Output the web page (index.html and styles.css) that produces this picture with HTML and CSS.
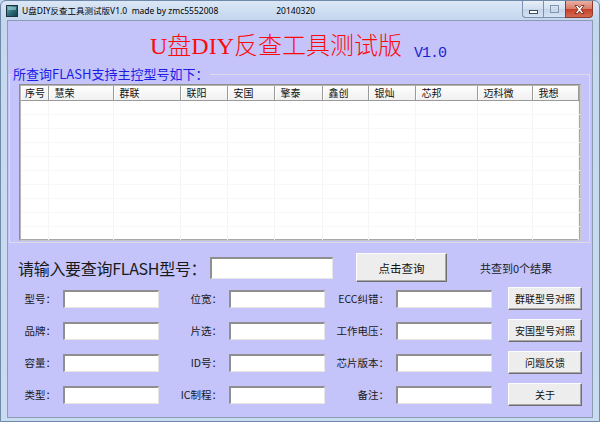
FILE: index.html
```html
<!DOCTYPE html>
<html lang="zh-CN">
<head>
<meta charset="utf-8">
<title>U盘DIY反查工具测试版V1.0</title>
<link rel="stylesheet" href="styles.css">
</head>
<body>
<div class="window">
  <div class="titlebar">
    <svg class="app-icon" width="12" height="12" viewBox="0 0 12 12">
      <defs>
        <linearGradient id="ig" x1="0" y1="0" x2="1" y2="1">
          <stop offset="0" stop-color="#7fb7c0"/>
          <stop offset="0.5" stop-color="#2d6f7d"/>
          <stop offset="1" stop-color="#123c48"/>
        </linearGradient>
      </defs>
      <rect x="0.5" y="0.5" width="11" height="11" fill="url(#ig)" stroke="#1d3440"/>
      <rect x="2" y="2" width="8" height="3" fill="#9fd0d6" opacity="0.6"/>
    </svg>
    <span class="caption">U盘DIY反查工具测试版V1.0&nbsp;&nbsp;made by zmc5552008</span>
    <span class="caption-date">20140320</span>
    <div class="caption-buttons">
      <span class="cb cb-min"><svg width="9" height="4" viewBox="0 0 9 4"><rect x="0.5" y="0.5" width="8" height="3" fill="#fff" stroke="#3b4f66"/></svg></span>
      <span class="cb cb-max"><svg width="9" height="8" viewBox="0 0 9 8"><rect x="0.5" y="0.5" width="8" height="7" fill="none" stroke="#8296ae"/><rect x="2.5" y="2.5" width="4" height="3" fill="none" stroke="#cdd8e6"/></svg></span>
      <span class="cb cb-close"><svg width="11" height="9" viewBox="0 0 11 9"><path d="M1 0.5h2.5l2 2.2 2-2.2H10L7 4.5l3 4H7.5l-2-2.4-2 2.4H1l3-4z" fill="#fff" stroke="#5b1f14" stroke-width="0.8" stroke-linejoin="round"/></svg></span>
    </div>
  </div>
  <div class="client">
    <div class="heading">
      <span class="app-title">U盘DIY反查工具测试版</span>
      <span class="app-version">V1.0</span>
    </div>
    <fieldset class="group">
      <legend class="group-title">所查询FLASH支持主控型号如下：</legend>
      <div class="listview">
        <table class="lv">
          <colgroup>
            <col class="w27"><col class="w65"><col class="w67"><col class="w47"><col class="w47"><col class="w48"><col class="w46"><col class="w47"><col class="w62"><col class="w55"><col class="w46"><col class="wfill">
          </colgroup>
          <thead>
            <tr><th>序号</th><th>慧荣</th><th>群联</th><th>联阳</th><th>安国</th><th>擎泰</th><th>鑫创</th><th>银灿</th><th>芯邦</th><th>迈科微</th><th>我想</th><th class="filler"></th></tr>
          </thead>
          <tbody>
            <tr><td></td><td></td><td></td><td></td><td></td><td></td><td></td><td></td><td></td><td></td><td></td><td></td></tr>
            <tr><td></td><td></td><td></td><td></td><td></td><td></td><td></td><td></td><td></td><td></td><td></td><td></td></tr>
            <tr><td></td><td></td><td></td><td></td><td></td><td></td><td></td><td></td><td></td><td></td><td></td><td></td></tr>
            <tr><td></td><td></td><td></td><td></td><td></td><td></td><td></td><td></td><td></td><td></td><td></td><td></td></tr>
            <tr><td></td><td></td><td></td><td></td><td></td><td></td><td></td><td></td><td></td><td></td><td></td><td></td></tr>
            <tr><td></td><td></td><td></td><td></td><td></td><td></td><td></td><td></td><td></td><td></td><td></td><td></td></tr>
            <tr><td></td><td></td><td></td><td></td><td></td><td></td><td></td><td></td><td></td><td></td><td></td><td></td></tr>
            <tr><td></td><td></td><td></td><td></td><td></td><td></td><td></td><td></td><td></td><td></td><td></td><td></td></tr>
            <tr><td></td><td></td><td></td><td></td><td></td><td></td><td></td><td></td><td></td><td></td><td></td><td></td></tr>
            <tr><td></td><td></td><td></td><td></td><td></td><td></td><td></td><td></td><td></td><td></td><td></td><td></td></tr>
          </tbody>
        </table>
      </div>
    </fieldset>
    <div class="search-row">
      <span class="search-label">请输入要查询FLASH型号：</span>
      <input class="field search-input" type="text">
      <button class="btn btn-search" type="button">点击查询</button>
      <span class="result">共查到0个结果</span>
    </div>
    <div class="form-grid">
      <label class="lbl">型号：</label><input class="field" type="text">
      <label class="lbl">位宽：</label><input class="field" type="text">
      <label class="lbl">ECC纠错：</label><input class="field" type="text">
      <button class="btn btn-small" type="button">群联型号对照</button>

      <label class="lbl">品牌：</label><input class="field" type="text">
      <label class="lbl">片选：</label><input class="field" type="text">
      <label class="lbl">工作电压：</label><input class="field" type="text">
      <button class="btn btn-small" type="button">安国型号对照</button>

      <label class="lbl">容量：</label><input class="field" type="text">
      <label class="lbl">ID号：</label><input class="field" type="text">
      <label class="lbl">芯片版本：</label><input class="field" type="text">
      <button class="btn btn-small" type="button">问题反馈</button>

      <label class="lbl">类型：</label><input class="field" type="text">
      <label class="lbl">IC制程：</label><input class="field" type="text">
      <label class="lbl">备注：</label><input class="field" type="text">
      <button class="btn btn-small" type="button">关于</button>
    </div>
  </div>
</div>
</body>
</html>
```

FILE: styles.css
```css
* { box-sizing: border-box; }
html, body { margin: 0; padding: 0; }
body {
  width: 600px;
  height: 422px;
  overflow: hidden;
  background: #c5d8ef;
  font-family: "Noto Sans CJK SC", sans-serif;
  color: #1a1a1a;
}

/* ---------- shared controls ---------- */
.field {
  display: block;
  flex: none;
  width: 96px;
  height: 18px;
  margin: 0;
  padding: 0 2px;
  background: #fff;
  border-style: solid;
  border-width: 2px 1px 1px 2px;
  border-color: #8f8f8f #e6e6e6 #e6e6e6 #8f8f8f;
  outline: none;
}
.btn {
  flex: none;
  margin: 0;
  padding: 0;
  background: #ededed;
  border: 1px solid;
  border-color: #fcfcfc #6e6e6e #6e6e6e #fcfcfc;
  box-shadow: inset -1px -1px 0 #a8a8a8;
  font-family: "Noto Sans CJK SC", sans-serif;
  color: #111;
}

.window {
  width: 600px;
  height: 422px;
  display: flex;
  flex-direction: column;
  border: 1px solid #6f89a8;
  border-radius: 6px 6px 0 0;
  background: linear-gradient(#dbe7f6, #c3d6ee 19px, #c6d9ef 60px, #c9dbf0);
}

/* ---------- title bar ---------- */
.titlebar {
  height: 19px;
  flex: none;
  display: flex;
  align-items: center;
  padding: 0 6px 0 5px;
}
.app-icon { flex: none; margin-right: 4px; }
.caption {
  font: 8.5px/12px "Noto Sans", "Noto Sans CJK SC", sans-serif;
  color: #000;
  white-space: nowrap;
}
.caption-date {
  font: 8.5px/12px "Noto Sans", sans-serif;
  color: #000;
  margin-left: 58px;
}
.caption-buttons {
  margin-left: auto;
  align-self: flex-start;
  display: flex;
  height: 17px;
}
.cb {
  display: flex;
  align-items: center;
  justify-content: center;
  height: 17px;
  border: 1px solid #7b91ad;
  border-top: 0;
}
.cb-min {
  width: 21px;
  border-radius: 0 0 0 4px;
  border-right: 0;
  background: linear-gradient(#e8f0f9, #d2dfef 50%, #c3d4ea 51%, #d4e2f2);
}
.cb-min svg { margin-top: 5px; }
.cb-max {
  width: 22px;
  border-right: 0;
  background: linear-gradient(#e8f0f9, #d2dfef 50%, #c3d4ea 51%, #d4e2f2);
}
.cb-close {
  width: 28px;
  border-color: #8e3b2b;
  border-radius: 0 0 4px 0;
  background: linear-gradient(#eab0a4, #d77a66 50%, #c6402a 51%, #d3684f);
}

/* ---------- client area ---------- */
.client {
  flex: none;
  height: 398px;
  margin: 0 6px;
  border: 1px solid #8a9bb2;
  background: #c4c4fa;
}

.heading {
  height: 45px;
  display: flex;
  justify-content: center;
  padding-right: 4px;
}
.app-title {
  font: 300 24px/28px "Liberation Serif", "Noto Sans CJK SC", serif;
  color: #ff0a0a;
  margin-top: 11px;
  white-space: nowrap;
}
.app-version {
  font: 15px/16px "Liberation Mono", monospace;
  letter-spacing: -1px;
  color: #1e1ed2;
  margin-top: 25px;
  margin-left: 12px;
}

/* ---------- group box ---------- */
.group {
  margin: 0 2px 0 1px;
  padding: 2px 2px 1px 2px;
  border: 1px solid #dcdce8;
  height: 177px;
}
.group-title {
  padding: 0 2px 0 1px;
  font: 13px/16px "Noto Sans CJK SC", sans-serif;
  color: #1c1ce6;
}

.listview {
  width: 562px;
  height: 157px;
  margin-left: 7px;
  border: 1px solid;
  border-color: #8c8c8c #c8c8c8 #c8c8c8 #8c8c8c;
  box-shadow: inset 1px 1px 0 #b4b4b4, inset -1px -1px 0 #a8a8a8;
  padding: 1px;
  background: #fff;
  overflow: hidden;
}
.lv {
  width: 558px;
  border-collapse: collapse;
  table-layout: fixed;
}
.w27 { width: 27px; }
.w65 { width: 65px; }
.w67 { width: 67px; }
.w47 { width: 47px; }
.w48 { width: 48px; }
.w46 { width: 46px; }
.w62 { width: 62px; }
.w55 { width: 55px; }
.wfill { width: 1px; }

.lv th {
  height: 14px;
  padding: 0 0 0 6px;
  font: 10px/13px "Noto Sans CJK SC", sans-serif;
  font-weight: normal;
  text-align: left;
  color: #111;
  background: linear-gradient(#fdfdfd, #f0f0f0);
  border-right: 1px solid #9a9a9a;
  border-bottom: 1px solid #9a9a9a;
  box-shadow: inset 1px 0 0 #fff;
  white-space: nowrap;
  overflow: hidden;
}
.lv th:first-child { padding-left: 4px; }
.lv th.filler { border-right: 0; padding: 0; }
.lv td {
  height: 14px;
  padding: 0;
  border-right: 1px solid #f5f5f5;
  border-bottom: 1px solid #f8f8f8;
}
.lv td:last-child { border-right: 0; }

/* ---------- search row ---------- */
.search-row {
  display: flex;
  align-items: center;
  height: 29px;
  margin-top: 10px;
  padding-left: 10px;
}
.search-label {
  flex: none;
  width: 192px;
  font: 16px/20px "Noto Sans CJK SC", sans-serif;
  letter-spacing: -0.3px;
  color: #1a1a1a;
  white-space: nowrap;
}
.field.search-input {
  width: 123px;
  height: 22px;
}
.btn.btn-search {
  width: 91px;
  height: 29px;
  margin-left: 23px;
  font-size: 11.5px;
}
.result {
  margin-left: 33px;
  font: 11px/14px "Noto Sans CJK SC", sans-serif;
  color: #1a1a1a;
  white-space: nowrap;
}

/* ---------- form grid ---------- */
.form-grid {
  display: grid;
  grid-template-columns: 55px 96px 70px 96px 71px 96px 90px;
  grid-auto-rows: 23px;
  row-gap: 9px;
  align-items: center;
  margin-top: 5px;
}
.lbl {
  text-align: right;
  padding-right: 7px;
  font: 10.5px/14px "Noto Sans CJK SC", sans-serif;
  color: #1a1a1a;
  white-space: nowrap;
}
.btn.btn-small {
  justify-self: end;
  width: 74px;
  height: 23px;
  font-size: 10px;
}
```
